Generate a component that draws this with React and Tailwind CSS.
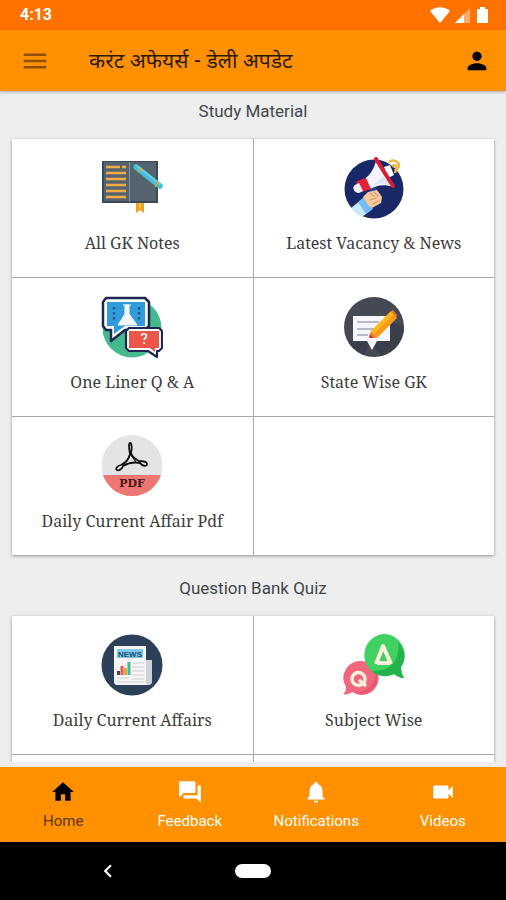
import React from "react";
import { MdMenu, MdPerson, MdHome, MdForum, MdNotifications, MdVideocam, MdChevronLeft } from "react-icons/md";

const iconClass = "h-[62px] w-[62px]";

function NotesIcon() {
  return (
    <svg viewBox="0 0 62 62" className={iconClass} aria-hidden="true">
      <path d="M35 44h8v12l-4-3-4 3z" fill="#f59e1b" />
      <path d="M38 44h2v8l-1-1-1 1z" fill="#fbc062" />
      <rect x="1" y="4" width="56" height="42" fill="#3c4a58" />
      <rect x="3" y="5" width="25" height="39" fill="#56646f" />
      <rect x="29" y="5" width="26" height="39" fill="#55636e" />
      <path d="M28.500 5v40" stroke="#8794a0" strokeWidth="1" />
      <path d="M5 10h14M21 10h4M5 16h20M5 22h20M5 28h20M5 34h20M5 40h20" stroke="#f0ab42" strokeWidth="2.600" />
      <path d="M35 10L59 29" stroke="#45bfd6" strokeWidth="5.500" strokeLinecap="round" />
      <path d="M36 9L59 27" stroke="#6dd5e6" strokeWidth="1.500" strokeLinecap="round" />
      <path d="M40.500 11l-3 4M57.500 24.500l-3.500 5" stroke="#dda53c" strokeWidth="2" />
    </svg>
  );
}

function MegaphoneIcon() {
  return (
    <svg viewBox="0 0 62 62" className={iconClass} aria-hidden="true">
      <circle cx="31" cy="32" r="29.500" fill="#1b2868" />
      <path d="M46 5c4-3 9-1 10 3 0 4-4 4-4 8M49 9c4-2 6 2 3 5" fill="none" stroke="#f4b63c" strokeWidth="2.600" />
      <path d="M26 31l6-2 3 7-6 2z" fill="#29418c" />
      <path d="M8 51l10-8 9 11-8 6c-5-2-8-5-11-9z" fill="#c9e8fb" />
      <path d="M15 45l6-5 9 12-7 5z" fill="#72bdf2" />
      <path d="M20 40l5-5 9-2 5 7-1 6-9 5-4-3z" fill="#f8c99e" />
      <path d="M27 36l4 3M31 35l4 4M27 43l6-2M30 47l5-3" stroke="#d9986e" strokeWidth="1.200" strokeLinecap="round" />
      <path d="M41 10l6-2 4 10-6 3z" fill="#fff" />
      <path d="M20 23C28 18 31 11 33 4l17 26c-8-3-16-2-23 2z" fill="#f4f6fb" />
      <path d="M28 29c8-3 15-3 22 0L43 18z" fill="#dfe6f3" />
      <path d="M14 24l9-3 5 11-9 3c-4 0-7-7-5-11z" fill="#e52038" />
      <path d="M12 28l4-2 4 8-4 2c-4 1-8-6-4-8z" fill="#eff3fa" />
      <path d="M33 2l17 27" stroke="#d91d35" strokeWidth="4" strokeLinecap="round" />
    </svg>
  );
}

function ChatQuizIcon() {
  return (
    <svg viewBox="0 0 62 62" className={iconClass} aria-hidden="true">
      <circle cx="31" cy="32" r="29.500" fill="#43b98d" />
      <path d="M5 2h39l4 4v24l-4 4H24L10 45V34H5l-3-4V6z" fill="#fff" stroke="#1c2850" strokeWidth="2.500" strokeLinejoin="round" />
      <path d="M6 6h38v24H24L13 38v-8H6z" fill="#329bdc" />
      <path d="M22 9h8M24 9v9l-7 11h19l-8-11V9z" fill="#f2f8fc" stroke="#f2f8fc" strokeWidth="1" />
      <path d="M13 11v13M38 11v13" stroke="#205b8b" strokeWidth="2.400" strokeDasharray="2.500 2.500" />
      <path d="M28 32h30l3 3v17l-3 3h-2v6l-9-6H28l-3-3V35z" fill="#fff" stroke="#1c2850" strokeWidth="2.200" strokeLinejoin="round" />
      <path d="M28 35h30v17h-4v4l-5-4H28z" fill="#eb5649" />
      <path d="M40.500 40c0-3 5-3 5 0 0 2-2.500 2-2.500 4" fill="none" stroke="#fff" strokeWidth="1.700" />
      <circle cx="43" cy="47" r="1.100" fill="#fff" />
    </svg>
  );
}

function EditNoteIcon() {
  return (
    <svg viewBox="0 0 62 62" className={iconClass} aria-hidden="true">
      <circle cx="31" cy="31" r="30" fill="#454954" />
      <path d="M11 46h17l-7 13C14 56 8 50 5 44zM47 25l14 6c0 13-9 26-23 29l-7-9z" fill="#3a3f4c" />
      <path d="M10 20h37v25H34l-5 9-5-9H10z" fill="#f5f6fa" />
      <path d="M14 26h22M14 33h17M14 39h11" stroke="#b7bbc7" strokeWidth="2.200" />
      <path d="M28 35l20-20 5 6-20 20z" fill="#ffb51c" />
      <path d="M31 38l20-20 3 4-20 20z" fill="#f79a1b" />
      <path d="M48 15l2-1 4 5-1 3z" fill="#f0801f" />
      <path d="M28 35l6 7-8 0z" fill="#ef7d35" />
      <path d="M26.500 38l4 4h-4z" fill="#c7303b" />
    </svg>
  );
}

function PdfIcon() {
  return (
    <svg viewBox="0 0 62 62" className={iconClass} aria-hidden="true">
      <circle cx="31" cy="30.500" r="30.500" fill="#e4e4e5" />
      <path d="M2 40h58C55 53 45 61 31 61S7 53 2 40z" fill="#ee7773" />
      <path d="M29 8c-1.500 0-1 6 0 11-1 5-5 9-9 11-4 1-6 4-4 5s5-1 6-4c5-3 12-4 17-3 2 3 7 4 7 1s-5-3-8-3c-4-2-7-5-8-8 1-4 1-10-1-10z" fill="none" stroke="#111" strokeWidth="1.800" strokeLinejoin="round" />
      <path d="M29 20l-4 7.500M30 20l5 7" stroke="#111" strokeWidth="1.200" />
      <text x="31" y="52" textAnchor="middle" fill="#43191b" className="font-['DejaVu_Serif'] text-[11px] font-bold">PDF</text>
    </svg>
  );
}

function NewsIcon() {
  return (
    <svg viewBox="0 0 62 62" className={iconClass} aria-hidden="true">
      <circle cx="31" cy="31" r="30.500" fill="#2c4159" />
      <path d="M43 26h8v23l-2 2h-8z" fill="#cbd2da" />
      <path d="M13 12h32v37l2 2H15l-2-2z" fill="#f4f4f5" />
      <rect x="16" y="15" width="26" height="9" fill="#80c9ed" />
      <text x="29" y="22.500" textAnchor="middle" fill="#204e70" className="font-['Liberation_Sans'] text-[8px] font-bold">NEWS</text>
      <path d="M31 29h12M31 33h12M31 37h12M31 41h12M16 44h12M31 45h12M16 48h27" stroke="#cbd0d5" strokeWidth="1.200" />
      <path d="M17.500 41v-4" stroke="#37485c" strokeWidth="3" />
      <path d="M21 41V32" stroke="#e45b4b" strokeWidth="3" />
      <path d="M24.500 41v-7" stroke="#f0a135" strokeWidth="3" />
      <path d="M28 41V28" stroke="#43bc91" strokeWidth="3" />
    </svg>
  );
}

function SubjectIcon() {
  return (
    <svg viewBox="0 0 62 62" className={iconClass} aria-hidden="true">
      <path d="M18 27a17 17 0 1 1-9 31c-3 2-6 3-9 2 2-1 3-4 3-7a17 17 0 0 1 15-26z" fill="#f2677c" />
      <path d="M34 40c2 14-10 22-21 19 9-1 20-7 20-22z" fill="#e5566f" />
      <circle cx="15.500" cy="45" r="6.500" fill="none" stroke="#fff1dc" strokeWidth="3.500" />
      <path d="M16 46l7 6" stroke="#fff1dc" strokeWidth="3.500" />
      <path d="M40 0a21 21 0 0 1 18 33c0 4 1 8 3 11-4 0-7-2-10-4A21 21 0 1 1 40 0z" fill="#3fd162" />
      <path d="M55 8c8 9 8 18 3 25 0 4 1 8 3 11-4 0-7-2-10-4-8 4-17 2-23-3C46 38 58 28 55 8z" fill="#22b34c" />
      <path d="M33 30l7-18 8 18M34 29h13" fill="none" stroke="#fff1dc" strokeWidth="4" strokeLinejoin="round" />
    </svg>
  );
}

const studyItems = [
  { label: "All GK Notes", Icon: NotesIcon },
  { label: "Latest Vacancy & News", Icon: MegaphoneIcon },
  { label: "One Liner Q & A", Icon: ChatQuizIcon },
  { label: "State Wise GK", Icon: EditNoteIcon },
  { label: "Daily Current Affair Pdf", Icon: PdfIcon },
];

const quizItems = [
  { label: "Daily Current Affairs", Icon: NewsIcon },
  { label: "Subject Wise", Icon: SubjectIcon },
];

const tabs = [
  { label: "Home", Icon: MdHome, active: true },
  { label: "Feedback", Icon: MdForum },
  { label: "Notifications", Icon: MdNotifications },
  { label: "Videos", Icon: MdVideocam },
];

function Tile({ label, Icon }) {
  return (
    <button type="button" className="flex h-[138px] flex-col items-center bg-white pt-[18px]">
      <Icon />
      <span className="mt-3 font-['Noto_Serif','DejaVu_Serif_Condensed','DejaVu_Serif',serif] text-base leading-6 text-[#3c3c3c]">
        {label}
      </span>
    </button>
  );
}

function Section({ title, items, blanks }) {
  return (
    <section className="shrink-0">
      <h2 className="text-center text-[17px] leading-6 text-[#42474c]">{title}</h2>
      <div className="mx-3 mt-4 grid grid-cols-2 gap-px bg-[#a8a8a8] shadow-[0_1px_3px_rgba(0,0,0,0.4)]">
        {items.map((item) => (
          <Tile key={item.label} {...item} />
        ))}
        {Array.from({ length: blanks }, (_, i) => (
          <div key={i} className="h-[138px] bg-white" />
        ))}
      </div>
    </section>
  );
}

export default function App() {
  return (
    <div className="flex h-screen flex-col bg-[#eeeeee] font-['Roboto',sans-serif]">
      <div className="flex h-[30px] shrink-0 items-center justify-between bg-[#ff7200] pr-4 pl-5 text-white">
        <span className="text-base font-bold">4:13</span>
        <div className="flex items-center gap-1">
          <svg viewBox="0 0 20 16" className="h-4 w-5" aria-hidden="true">
            <path d="M0 4C6-1 14-1 20 4L10 16z" fill="currentColor" />
          </svg>
          <svg viewBox="0 0 16 16" className="h-4 w-4" aria-hidden="true">
            <path d="M16 1v15H1z" fill="#ffaa66" />
            <path d="M10 7v9H1z" fill="currentColor" />
          </svg>
          <svg viewBox="0 0 16 18" className="h-[18px] w-4" aria-hidden="true">
            <path d="M6 1h5v2h3v14H3V3h3z" fill="currentColor" />
          </svg>
        </div>
      </div>

      <header className="z-10 flex h-[61px] shrink-0 items-center bg-[#ff9100] pr-[15px] pl-4 shadow-[0_1px_3px_rgba(0,0,0,0.3)]">
        <button type="button" aria-label="Menu" className="ml-1 text-[#8c5005]">
          <MdMenu size={30} />
        </button>
        <h1 className="ml-[39px] flex-1 pt-1 font-['Noto_Sans_Devanagari','Noto_Sans',sans-serif] text-[21px] leading-8 text-[#2a1a08]">
          करंट अफेयर्स - डेली अपडेट
        </h1>
        <button type="button" aria-label="Profile" className="text-black">
          <MdPerson size={28} />
        </button>
      </header>

      <main className="mb-[5px] flex min-h-0 flex-1 flex-col gap-[21px] overflow-y-auto pt-2 [scrollbar-width:none]">
        <Section title="Study Material" items={studyItems} blanks={1} />
        <Section title="Question Bank Quiz" items={quizItems} blanks={2} />
      </main>

      <nav className="grid h-[75px] shrink-0 grid-cols-4 bg-[#ff9100]">
        {tabs.map(({ label, Icon, active }) => (
          <a
            key={label}
            href="#"
            aria-current={active ? "page" : undefined}
            className={active ? "flex flex-col items-center pt-3 text-black" : "flex flex-col items-center pt-3 text-white"}
          >
            <Icon size={26} />
            <span className={active ? "mt-1 text-[15px] leading-6 text-[#5c3400]" : "mt-1 text-[15px] leading-6"}>{label}</span>
          </a>
        ))}
      </nav>

      <div className="grid h-[58px] shrink-0 grid-cols-7 items-center bg-black text-white">
        <button type="button" aria-label="Back" className="col-start-2 justify-self-center">
          <MdChevronLeft size={26} />
        </button>
        <button type="button" aria-label="Home screen" className="col-start-4 h-[14px] w-9 justify-self-center rounded-full bg-white" />
      </div>
    </div>
  );
}
